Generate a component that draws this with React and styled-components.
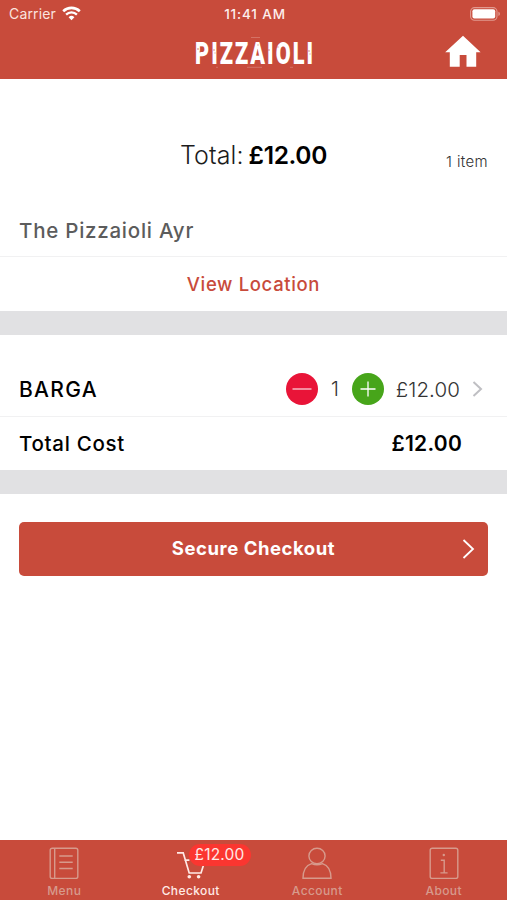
import React, { useState } from 'react';
import styled, { createGlobalStyle } from 'styled-components';

const GlobalStyle = createGlobalStyle`
  * {
    box-sizing: border-box;
  }

  body {
    margin: 0;
    background-color: #ffffff;
    color: #000000;
    font-family: Inter, 'Liberation Sans', sans-serif;
  }

  button {
    font-family: inherit;
    border: none;
    padding: 0;
    cursor: pointer;
  }
`;

//Styles
const Screen = styled.div`
  display: flex;
  flex-direction: column;
  width: 507px;
  height: 900px;
  overflow: hidden;
`;

const Header = styled.header`
  height: 79px;
  background-color: #c84b3b;
  color: #ffffff;
`;

const StatusBar = styled.div`
  display: grid;
  grid-template-columns: 1fr auto 1fr;
  align-items: center;
  height: 27px;
  padding: 0 6px 0 9px;
`;

const Carrier = styled.div`
  display: flex;
  align-items: center;
  gap: 6px;
  color: #fbe3df;
  font-size: 14px;
  letter-spacing: 0.15px;
`;

const Clock = styled.div`
  color: #fdeeec;
  font-size: 13.5px;
  font-weight: 500;
  letter-spacing: 0.85px;
`;

const Battery = styled.svg`
  justify-self: end;
`;

const NavBar = styled.div`
  display: grid;
  grid-template-columns: 1fr auto 1fr;
  height: 52px;
  padding: 4px 26px 0 26px;
`;

const LogoSvg = styled.svg`
  overflow: visible;
`;

const LogoText = styled.text`
  font-family: Roboto, sans-serif;
  font-size: 32px;
  font-weight: 900;
  letter-spacing: 3px;
`;

const HomeButton = styled.button`
  justify-self: end;
  align-self: start;
  height: 34px;
  margin-top: 4px;
  background: transparent;
`;

const Text = styled.span`
  font-size: ${props => props.$size || 20}px;
  font-weight: ${props => props.$weight || 400};
  letter-spacing: ${props => props.$spacing || 0}px;
  color: ${props => props.$color || '#000000'};
  line-height: 1.2;
  white-space: nowrap;
`;

const Summary = styled.section`
  display: grid;
  grid-template-columns: 1fr auto 1fr;
  align-items: center;
  height: 125px;
  padding: 28px 19px 0;
`;

const SummaryTotal = styled.div`
  grid-column: 2;
  display: flex;
  align-items: baseline;
  gap: 5px;
`;

const ItemCount = styled.div`
  justify-self: end;
  padding-top: 10px;
`;

const Row = styled.div`
  display: flex;
  align-items: center;
  justify-content: ${props => (props.$center ? 'center' : 'space-between')};
  height: ${props => props.$height}px;
  padding: ${props => props.$padding || '0 19px'};
  border-bottom: ${props => (props.$divider ? '1px solid #f1f1f2' : 'none')};
`;

const Band = styled.div`
  height: 24px;
  background-color: #e1e1e3;
`;

const LinkButton = styled.button`
  background: transparent;
`;

const ItemName = styled.div`
  padding-top: 2px;
`;

const ItemControls = styled.div`
  display: flex;
  align-items: center;
`;

const RoundButton = styled.button`
  display: flex;
  width: 32px;
  height: 32px;
  border-radius: 50%;
  background-color: ${props => props.$color};
`;

const Quantity = styled.div`
  display: flex;
  justify-content: center;
  width: 34px;
`;

const ItemPrice = styled.div`
  display: flex;
  justify-content: flex-end;
  width: 76px;
  margin-right: 12px;
  padding-top: 2px;
`;

const CheckoutButton = styled.button`
  display: grid;
  grid-template-columns: 1fr auto 1fr;
  align-items: center;
  height: 54px;
  margin: 27.5px 19px 0;
  padding: 0 13px;
  border-radius: 5px;
  background-color: #c84b3b;

  > :first-child {
    grid-column: 2;
  }

  > :last-child {
    justify-self: end;
  }
`;

const TabBar = styled.nav`
  display: grid;
  grid-template-columns: repeat(4, 1fr);
  height: 60px;
  margin-top: auto;
  padding-left: 1px;
  background-color: #c84b3b;
`;

const Tab = styled.button`
  position: relative;
  display: flex;
  flex-direction: column;
  align-items: center;
  padding-top: 7px;
  background: transparent;
  color: ${props => (props.$active ? '#ffeae6' : '#d79a8c')};
`;

const TabLabel = styled.span`
  margin-top: 3px;
  font-size: 12px;
  font-weight: 500;
  line-height: 15px;
  letter-spacing: 0.4px;
`;

const Badge = styled.span`
  position: absolute;
  top: 4px;
  left: 61px;
  height: 22px;
  padding: 0 6px;
  border-radius: 11px;
  background-color: #fb3630;
  color: #ffe9e6;
  font-size: 15.5px;
  line-height: 22px;
  letter-spacing: 0.2px;
`;
//styles end

const WifiIcon = () => (
  <svg width="19" height="15" viewBox="0 0 19 15" fill="none">
    <path d="M1.2 5.2a12 12 0 0 1 16.6 0" stroke="#fff" strokeWidth="2.6" />
    <path d="M4.1 8.6a7.7 7.7 0 0 1 10.8 0" stroke="#fff" strokeWidth="2.3" />
    <path d="M6.6 11.2a4.2 4.2 0 0 1 5.8 0L9.5 14.2z" fill="#fff" />
  </svg>
);

const BatteryIcon = () => (
  <Battery width="31" height="14" viewBox="0 0 31 14" fill="none">
    <rect x="0.6" y="0.6" width="26.4" height="12.6" rx="4" stroke="#e19a90" strokeWidth="1.1" />
    <rect x="2.4" y="2.3" width="22.8" height="9.2" rx="2" fill="#fff" />
    <path d="M28.4 4.8c2 .6 2 3.6 0 4.2z" fill="#e19a90" />
  </Battery>
);

const Logo = () => (
  <LogoSvg width="126" height="46" viewBox="-2 -4 126 46">
    <LogoText x="2" y="29" textLength="120" lengthAdjust="spacingAndGlyphs" fill="#fff">
      PIZZAIOLI
    </LogoText>
    {/* worn print specks */}
    <g fill="#c84b3b" opacity="0.45">
      <circle cx="5" cy="14" r="1" />
      <circle cx="7" cy="17" r="0.8" />
      <circle cx="21" cy="15" r="0.9" />
      <circle cx="22" cy="18" r="0.7" />
      <circle cx="60" cy="9" r="0.8" />
      <circle cx="65" cy="10" r="0.8" />
      <circle cx="76" cy="15" r="0.9" />
      <circle cx="85" cy="12" r="0.8" />
      <circle cx="116" cy="16" r="0.9" />
      <circle cx="117" cy="19" r="0.7" />
    </g>
    <g stroke="#e8aaa2" strokeWidth="0.6" opacity="0.7">
      <path d="M58 2.5h9M54 32.3h15M23 32.3h2M97 32.3h3" />
    </g>
  </LogoSvg>
);

const HomeIcon = () => (
  <svg width="36" height="34" viewBox="0 0 36 34">
    <path d="M18 0.7 35.6 17.3H31.2V31.7H21.5V20H14.7V31.7H4.8V17.3H.2z" fill="#fff" />
  </svg>
);

const SignIcon = ({ plus }) => (
  <svg width="32" height="32" viewBox="0 0 32 32" stroke="#fff" strokeWidth="1.3">
    {plus ? <path d="M8.5 16h15M16 8.5v15" /> : <path d="M6.5 16h19" opacity="0.8" />}
  </svg>
);

const MenuIcon = () => (
  <svg width="32" height="33" viewBox="0 0 32 33" fill="none" stroke="currentColor" strokeWidth="1.4">
    <rect x="2.2" y="1.2" width="27.6" height="30.2" rx="2" />
    <path d="M6.7 1.2v30.2M11.3 9h13.4M11.3 15.3h13.4M11.3 21.5h13.4" />
  </svg>
);

const CartIcon = () => (
  <svg width="32" height="33" viewBox="0 0 32 33" fill="none" stroke="currentColor" strokeWidth="1.7">
    <path d="M2 5.8h6.2l6 20.2H26l3.2-10M9.4 13.2h5" />
    <circle cx="14.3" cy="29.8" r="1.8" fill="currentColor" stroke="none" />
    <circle cx="23.6" cy="29.8" r="1.8" fill="currentColor" stroke="none" />
  </svg>
);

const AccountIcon = () => (
  <svg width="32" height="33" viewBox="0 0 32 33" fill="none" stroke="currentColor" strokeWidth="1.4">
    <ellipse cx="16" cy="9" rx="8.1" ry="7.7" />
    <path d="M2 31.3c0-8.4 3-13 8.6-14.7 3.4 1.5 7.4 1.5 10.8 0 5.6 1.7 8.6 6.3 8.6 14.7z" />
  </svg>
);

const AboutIcon = () => (
  <svg width="32" height="33" viewBox="0 0 32 33" fill="none" stroke="currentColor" strokeWidth="1.4">
    <rect x="2.2" y="1.2" width="27.6" height="30.2" rx="2" />
    <path d="M12.8 13.3h3.4v12.4M12.4 25.9h7.2" />
    <circle cx="15.8" cy="8" r="1.2" fill="currentColor" stroke="none" />
  </svg>
);

const tabs = [
  { name: 'Menu', Icon: MenuIcon },
  { name: 'Checkout', Icon: CartIcon },
  { name: 'Account', Icon: AccountIcon },
  { name: 'About', Icon: AboutIcon }
];

const App = () => {
  const [quantity, setQuantity] = useState(1);
  const [tab, setTab] = useState('Checkout');

  const total = `£${(quantity * 12).toFixed(2)}`;

  return (
    <Screen>
      <GlobalStyle />
      <Header>
        <StatusBar>
          <Carrier>
            Carrier
            <WifiIcon />
          </Carrier>
          <Clock>11:41 AM</Clock>
          <BatteryIcon />
        </StatusBar>
        <NavBar>
          <span />
          <Logo />
          <HomeButton aria-label="Home">
            <HomeIcon />
          </HomeButton>
        </NavBar>
      </Header>

      <Summary>
        <SummaryTotal>
          <Text $size={25} $weight={300} $spacing={0.1} $color="#1c1c1c">Total:</Text>
          <Text $size={24.5} $weight={600} $spacing={-0.35}>{total}</Text>
        </SummaryTotal>
        <ItemCount>
          <Text $size={15} $weight={300} $spacing={0.35} $color="#333333">
            {quantity} {quantity === 1 ? 'item' : 'items'}
          </Text>
        </ItemCount>
      </Summary>

      <Row $height={53} $padding="2px 19px 0" $divider>
        <Text $size={20.5} $weight={500} $spacing={0.75} $color="#5c5c5c">The Pizzaioli Ayr</Text>
      </Row>
      <Row $height={54} $padding="1px 19px 0" $center>
        <LinkButton>
          <Text $size={18.5} $weight={500} $spacing={0.65} $color="#c84b3b">View Location</Text>
        </LinkButton>
      </Row>
      <Band />

      <Row $height={82} $padding="27px 24px 0 19px" $divider>
        <ItemName>
          <Text $size={21} $weight={500} $spacing={1.3}>BARGA</Text>
        </ItemName>
        <ItemControls>
          <RoundButton
            $color="#e91438"
            aria-label="Remove one"
            onClick={() => setQuantity(Math.max(0, quantity - 1))}
          >
            <SignIcon />
          </RoundButton>
          <Quantity>
            <Text $weight={300} $color="#333333">{quantity}</Text>
          </Quantity>
          <RoundButton
            $color="#47a51a"
            aria-label="Add one"
            onClick={() => setQuantity(quantity + 1)}
          >
            <SignIcon plus />
          </RoundButton>
          <ItemPrice>
            <Text $size={20.5} $weight={300} $spacing={0.1} $color="#333333">{total}</Text>
          </ItemPrice>
          <svg width="11" height="18" viewBox="0 0 11 18" fill="none" stroke="#bfbfc3" strokeWidth="2">
            <path d="M1.5 2 9 9l-7.5 7" />
          </svg>
        </ItemControls>
      </Row>
      <Row $height={53} $padding="1px 45px 0 19px">
        <Text $size={20.5} $weight={500} $spacing={0.7}>Total Cost</Text>
        <Text $size={21} $weight={600} $spacing={0.25}>{total}</Text>
      </Row>
      <Band />

      <CheckoutButton>
        <Text $size={18.5} $weight={700} $spacing={0.55} $color="#ffffff">Secure Checkout</Text>
        <svg width="13" height="20" viewBox="0 0 13 20" fill="none" stroke="#fff" strokeWidth="1.8">
          <path d="M1.5 1 11 10l-9.5 9" />
        </svg>
      </CheckoutButton>

      <TabBar>
        {tabs.map(({ name, Icon }) => (
          <Tab key={name} $active={tab === name} onClick={() => setTab(name)}>
            <Icon />
            <TabLabel>{name}</TabLabel>
            {name === 'Checkout' && <Badge>{total}</Badge>}
          </Tab>
        ))}
      </TabBar>
    </Screen>
  );
};

export default App;
